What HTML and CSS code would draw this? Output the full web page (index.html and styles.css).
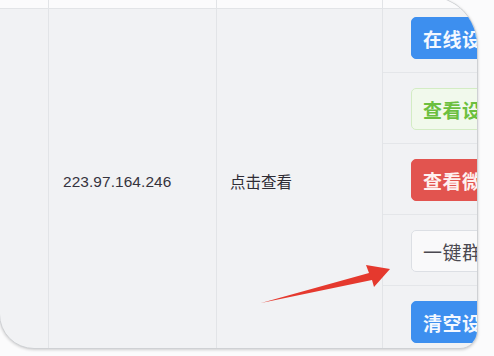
FILE: index.html
```html
<!DOCTYPE html>
<html lang="zh-CN">
<head>
<meta charset="utf-8">
<title>设备列表</title>
<link rel="stylesheet" href="styles.css">
</head>
<body>
<div class="card">
  <div class="table">
    <div class="th c1"></div>
    <div class="th c2"></div>
    <div class="th c3"></div>
    <div class="th c4"></div>
    <div class="td c1"></div>
    <div class="td c2"><span class="ip">223.97.164.246</span></div>
    <div class="td c3"><span class="link">点击查看</span></div>
    <div class="td c4 actions">
      <div class="act first"><button class="btn primary">在线设备</button></div>
      <div class="act"><button class="btn success-plain">查看设备</button></div>
      <div class="act"><button class="btn danger">查看微信</button></div>
      <div class="act"><button class="btn default">一键群发</button></div>
      <div class="act last"><button class="btn primary">清空设备</button></div>
    </div>
  </div>
</div>
<svg class="arrow" width="494" height="356" viewBox="0 0 494 356">
  <polygon points="261,303 369,273 366,265 390,269 374,287 372,280" fill="#e5392e"/>
</svg>
</body>
</html>
```
FILE: styles.css
```css
html, body {
  margin: 0;
  padding: 0;
}
body {
  width: 494px;
  height: 356px;
  overflow: hidden;
  background: #fbfbfc;
  position: relative;
  font-family: "Liberation Sans", "Noto Sans CJK SC", sans-serif;
}
.card {
  box-sizing: border-box;
  width: 479px;
  height: 353px;
  margin: -4px 0 0 -1px;
  background: #f1f2f4;
  border: 1px solid #cfd1d4;
  border-radius: 0 49px 18px 35px;
  box-shadow: 0 1px 3px rgba(0, 0, 0, 0.18);
  overflow: hidden;
}
.table {
  display: grid;
  grid-template-columns: 49px 168px 166px 1fr;
  grid-template-rows: 12px 1fr;
  height: 100%;
}
.th {
  background: #fbfbfc;
  border-bottom: 1px solid #e2e4e7;
}
.c1, .c2, .c3 {
  border-right: 1px solid #e2e4e7;
}
.td {
  display: flex;
  align-items: center;
}
.td.c2 {
  padding-left: 14px;
}
.td.c3 {
  padding-left: 13px;
}
.ip {
  font-size: 15.4px;
  color: #36333d;
  letter-spacing: 0.1px;
  margin-top: -2px;
}
.link {
  font-family: "Noto Sans CJK SC", sans-serif;
  font-size: 15.5px;
  color: #2f2c35;
  margin-top: -3px;
}
.actions {
  flex-direction: column;
  align-items: stretch;
  justify-content: flex-start;
}
.act {
  padding: 15px 0 13px 28px;
  border-bottom: 1px solid #e4e6e9;
}
.act.first {
  padding-top: 8px;
}
.act.last {
  border-bottom: none;
}
.btn {
  box-sizing: border-box;
  display: block;
  width: 120px;
  height: 42px;
  padding: 0 0 0 11px;
  text-align: left;
  border-radius: 5px;
  border: 1px solid transparent;
  font-family: "Noto Sans CJK SC", sans-serif;
  font-size: 19px;
  font-weight: 700;
  letter-spacing: 0.5px;
  cursor: pointer;
}
.primary {
  background: #3d8fef;
  border-color: #3d8fef;
  color: #f4f8ff;
}
.success-plain {
  background: #f1f9ec;
  border-color: #d3ecc4;
  color: #6cbf3f;
}
.danger {
  background: #e2544f;
  border-color: #e2544f;
  color: #fff1f0;
}
.default {
  background: #f9f9fa;
  border-color: #dcdfe4;
  color: #4a4850;
  font-weight: 400;
}
.arrow {
  position: absolute;
  left: 0;
  top: 0;
  pointer-events: none;
}
```
